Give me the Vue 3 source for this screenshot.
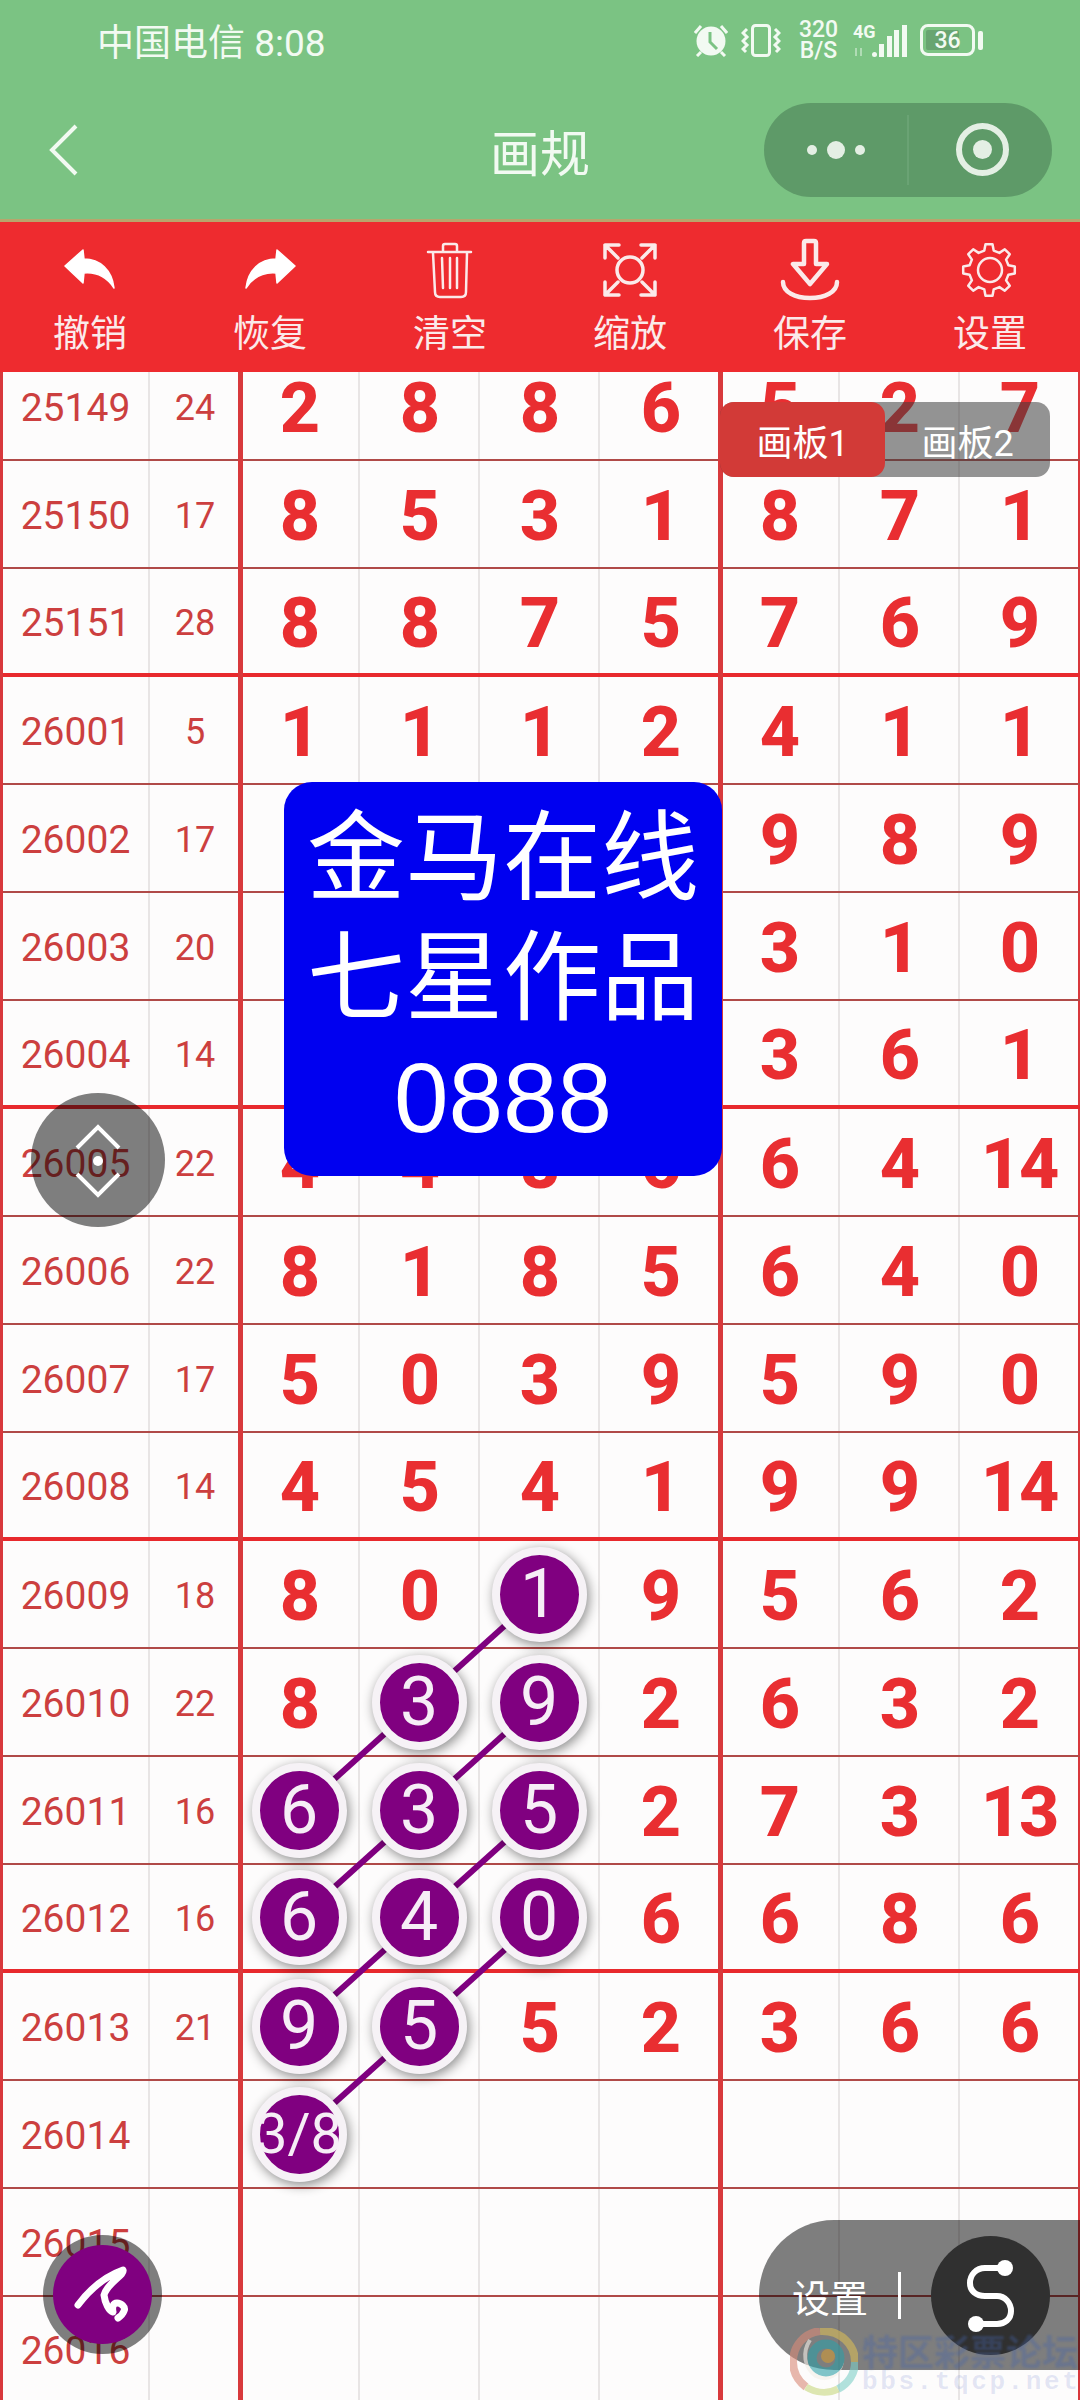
<template>
  <div class="page">
    <header class="top">
      <div class="status">
        <span class="carrier">中国电信 8:08</span>
        <div class="status-icons">
          <svg class="alarm" width="34" height="33" viewBox="0 0 34 33">
            <circle cx="17" cy="17" r="14.5" fill="#f2faf2" />
            <path d="M16 8V18L23 25" fill="none" stroke="#7bc383" stroke-width="3" />
            <path d="M1 9L7 2M33 9L27 2M7 28L3 32M27 28L31 32" fill="none" stroke="#f2faf2" stroke-width="3" />
          </svg>
          <svg class="vibrate" width="40" height="33" viewBox="0 0 40 33">
            <rect x="11.5" y="1.5" width="17" height="30" rx="3" fill="none" stroke="#f2faf2" stroke-width="3" />
            <path d="M6 5L2 9L6 13L2 17L6 21L2 25L5 28M34 5L38 9L34 13L38 17L34 21L38 25L35 28" fill="none" stroke="#f2faf2" stroke-width="3" />
          </svg>
          <div class="speed"><span>320</span><span>B/S</span></div>
          <svg class="net" width="54" height="34" viewBox="0 0 54 34">
            <text x="0" y="15" class="net-text">4G</text>
            <path d="M3 25V33M8 25V33" stroke="#f2faf2" stroke-opacity=".45" stroke-width="2" />
            <rect x="19" y="29" width="5" height="5" rx="2.5" fill="#f2faf2" />
            <rect x="26" y="21" width="5" height="13" fill="#f2faf2" />
            <rect x="34" y="13" width="5" height="21" fill="#f2faf2" />
            <rect x="41" y="7" width="5" height="27" fill="#f2faf2" />
            <rect x="49" y="2" width="5" height="32" fill="#f2faf2" />
          </svg>
          <div class="battery">
            <div class="battery-body"><span class="battery-fill"></span><span class="battery-num">36</span></div>
            <span class="battery-tip"></span>
          </div>
        </div>
      </div>

      <nav class="nav">
        <svg class="back" width="30" height="52" viewBox="0 0 30 52">
          <path d="M27 2L3 26L27 50" fill="none" stroke="#f2faf2" stroke-width="4" />
        </svg>
        <h1 class="title">画规</h1>
        <div class="capsule">
          <div class="capsule-dots"><i class="small"></i><i class="big"></i><i class="small"></i></div>
          <span class="capsule-line"></span>
          <div class="capsule-target"><i></i></div>
        </div>
      </nav>
    </header>

    <div class="toolbar">
      <div v-for="tool in tools" :key="tool.label" class="tool">
        <svg width="70" height="70" viewBox="0 0 70 70">
          <path v-if="tool.fill" :d="tool.fill" fill="#fff" stroke="#fff" stroke-width="1.5" stroke-linejoin="round" />
          <path v-if="tool.line" :d="tool.line" fill="none" stroke="#fbeaea" :stroke-width="tool.width" stroke-linejoin="round" stroke-linecap="round" />
          <circle v-if="tool.ring" cx="35" :cy="tool.ringY" :r="tool.ring" fill="none" stroke="#fbeaea" :stroke-width="tool.width" />
        </svg>
        <span>{{ tool.label }}</span>
      </div>
    </div>

    <main class="board">
      <div class="sheet">
        <svg class="links" width="1080" height="2052">
          <line
            v-for="(link, i) in links"
            :key="i"
            :x1="cx(link[1])"
            :y1="cy(link[0])"
            :x2="cx(link[3])"
            :y2="cy(link[2])"
            stroke="#800080"
            stroke-width="6"
          />
        </svg>

        <div v-for="(row, r) in rows" :key="row.no" class="row" :class="{ heavy: (r + 2) % 4 === 0 }">
          <div class="cell no">{{ row.no }}</div>
          <div class="cell sum sep">{{ row.sum }}</div>
          <div
            v-for="(value, c) in row.nums"
            :key="c"
            class="cell num"
            :class="{ sep: c === 3 }"
          >
            <span v-if="picked[r + '-' + c]" class="ball" :class="{ tiny: picked[r + '-' + c].length > 1 }">{{ picked[r + '-' + c] }}</span>
            <span v-else class="digit">{{ value }}</span>
          </div>
        </div>
      </div>
    </main>

    <div class="tabs">
      <span class="tab active">画板1</span>
      <span class="tab">画板2</span>
    </div>

    <div class="notice">
      <div>金马在线</div>
      <div>七星作品</div>
      <div>0888</div>
    </div>

    <div class="float-move">
      <svg width="60" height="90" viewBox="0 0 60 90">
        <path d="M9 33L30 12L51 33M9 59L30 80L51 59" fill="none" stroke="#fff" stroke-width="4" />
        <circle cx="30" cy="46" r="5" fill="#fff" />
      </svg>
    </div>

    <div class="float-pen">
      <div class="pen-inner">
        <svg width="99" height="99" viewBox="0 0 99 99">
          <path
            d="M25 60C34 48 50 32 70 25C72 30 54 38 51 50C52 58 56 66 60 67C59 62 60 58 64 58C68 58 73 62 71 66C70 69 68 71 65 73"
            fill="none"
            stroke="#fff"
            stroke-width="7"
            stroke-linecap="round"
            stroke-linejoin="round"
          />
        </svg>
      </div>
    </div>

    <div class="settings">
      <span class="settings-text">设置</span>
      <span class="settings-line"></span>
      <div class="settings-btn">
        <svg width="119" height="119" viewBox="0 0 119 119">
          <path d="M74 32H54C45 32 39 39 39 47C39 55 45 60 54 60H66C74 60 80 67 80 75C80 83 74 88 66 88H45" fill="none" stroke="#fff" stroke-width="6" />
          <circle cx="74" cy="32" r="8" fill="#fff" />
          <circle cx="45" cy="88" r="8" fill="#fff" />
        </svg>
      </div>
    </div>

    <div class="forum-mark">
      <svg width="68" height="68" viewBox="0 0 68 68">
        <path d="M30 3C14 5 3 18 3 34C3 44 8 53 16 59" fill="none" stroke="#d98a78" stroke-width="8" />
        <path d="M30 3C50 2 65 16 65 34" fill="none" stroke="#d8bc58" stroke-width="8" />
        <path d="M65 34C65 46 58 56 48 61" fill="none" stroke="#7fd0c8" stroke-width="8" />
        <path d="M48 61C38 66 26 65 16 59" fill="none" stroke="#c8d880" stroke-width="7" />
        <path d="M20 12C12 24 14 40 26 48C38 54 50 46 52 34" fill="none" stroke="#f4efe8" stroke-width="4" />
        <circle cx="36" cy="30" r="14" fill="none" stroke="#2f9fa6" stroke-width="9" />
        <circle cx="38" cy="28" r="7" fill="#d09a38" />
      </svg>
      <div class="forum-text">
        <div class="forum-name">特区彩票论坛</div>
        <div class="forum-url">bbs.tqcp.net</div>
      </div>
    </div>
  </div>
</template>

<script setup>
const gearPath = (x, y, outer, inner, teeth) => {
  const step = (Math.PI * 2) / teeth;
  const pts = [];
  for (let i = 0; i < teeth; i++) {
    const a = i * step - Math.PI / 2;
    const at = (r, d) => {
      const px = x + r * Math.cos(a + d * step);
      const py = y + r * Math.sin(a + d * step);
      return px.toFixed(1) + " " + py.toFixed(1);
    };
    pts.push(at(inner, -0.3), at(outer, -0.17), at(outer, 0.17), at(inner, 0.3));
  }
  return "M" + pts.join("L") + "Z";
};

const tools = [
  {
    label: "撤销",
    fill: "M10 29L28 13L29 22C45 22 57 33 59 51C51 39 41 35 29 36L28 46Z"
  },
  {
    label: "恢复",
    fill: "M60 29L42 13L41 22C25 22 13 33 11 51C19 39 29 35 41 36L42 46Z"
  },
  {
    label: "清空",
    line: "M13 15H56M28 15V9Q28 7 30 7H40Q42 7 42 9V15M18 16L20 55Q20 60 25 60H46Q51 60 51 55L52 16M27 21L28 51M35 21V51M42 21L42 51",
    width: 2.5
  },
  {
    label: "缩放",
    line: "M24 8H10V21M10 8L23 21M46 8H60V21M60 8L47 21M24 58H10V45M10 58L23 45M46 58H60V45M60 58L47 45",
    ring: 13,
    ringY: 33,
    width: 3.5
  },
  {
    label: "保存",
    line: "M29 6Q29 4 31 4H39Q41 4 41 6V27H52L35 47L18 27H29ZM8 45C8 55 20 61 35 61C50 61 62 55 62 45",
    width: 4.5
  },
  {
    label: "设置",
    line: gearPath(34, 33, 26, 20, 8),
    ring: 12,
    ringY: 33,
    width: 2.5
  }
];

const rows = [
  { no: "25149", sum: 24, nums: [2, 8, 8, 6, 5, 2, 7] },
  { no: "25150", sum: 17, nums: [8, 5, 3, 1, 8, 7, 1] },
  { no: "25151", sum: 28, nums: [8, 8, 7, 5, 7, 6, 9] },
  { no: "26001", sum: 5, nums: [1, 1, 1, 2, 4, 1, 1] },
  { no: "26002", sum: 17, nums: ["", "", "", "", 9, 8, 9] },
  { no: "26003", sum: 20, nums: ["", "", "", "", 3, 1, 0] },
  { no: "26004", sum: 14, nums: ["", "", "", "", 3, 6, 1] },
  { no: "26005", sum: 22, nums: [4, 4, 8, 6, 6, 4, 14] },
  { no: "26006", sum: 22, nums: [8, 1, 8, 5, 6, 4, 0] },
  { no: "26007", sum: 17, nums: [5, 0, 3, 9, 5, 9, 0] },
  { no: "26008", sum: 14, nums: [4, 5, 4, 1, 9, 9, 14] },
  { no: "26009", sum: 18, nums: [8, 0, 1, 9, 5, 6, 2] },
  { no: "26010", sum: 22, nums: [8, 3, 9, 2, 6, 3, 2] },
  { no: "26011", sum: 16, nums: [6, 3, 5, 2, 7, 3, 13] },
  { no: "26012", sum: 16, nums: [6, 4, 0, 6, 6, 8, 6] },
  { no: "26013", sum: 21, nums: [9, 5, 5, 2, 3, 6, 6] },
  { no: "26014", sum: "", nums: ["", "", "", "", "", "", ""] },
  { no: "26015", sum: "", nums: ["", "", "", "", "", "", ""] },
  { no: "26016", sum: "", nums: ["", "", "", "", "", "", ""] }
];

// balls placed on the sheet, keyed by row-column
const picked = {
  "11-2": "1",
  "12-1": "3",
  "12-2": "9",
  "13-0": "6",
  "13-1": "3",
  "13-2": "5",
  "14-0": "6",
  "14-1": "4",
  "14-2": "0",
  "15-0": "9",
  "15-1": "5",
  "16-0": "3/8"
};

const links = [
  [11, 2, 12, 1],
  [12, 1, 13, 0],
  [12, 2, 13, 1],
  [13, 1, 14, 0],
  [13, 2, 14, 1],
  [14, 1, 15, 0],
  [14, 2, 15, 1],
  [15, 1, 16, 0]
];

const cx = (col) => 300 + col * 120;
const cy = (row) => 53 + row * 108;
</script>

<style scoped>
.page {
  position: relative;
  width: 1080px;
  height: 2400px;
  overflow: hidden;
  background: #fdfcfc;
  font-family: Roboto, "Noto Sans CJK SC", sans-serif;
}

.top {
  height: 219px;
  background: #7bc383;
  border-bottom: 3px solid #b9a56c;
  color: #f2faf2;
}

.status {
  display: flex;
  align-items: center;
  height: 80px;
  padding: 0 97px;
}

.carrier {
  font-size: 37px;
}

.status-icons {
  display: flex;
  align-items: center;
  margin-left: auto;
}

.vibrate {
  margin-left: 13px;
}

.speed {
  display: flex;
  flex-direction: column;
  align-items: center;
  margin-left: 18px;
  width: 39px;
  font-size: 23px;
  font-weight: 500;
  line-height: 21px;
}

.net {
  margin-left: 15px;
}

.net-text {
  font-family: Roboto, sans-serif;
  font-size: 18px;
  font-weight: 700;
  fill: #f2faf2;
}

.battery {
  display: flex;
  align-items: center;
  margin-left: 13px;
}

.battery-body {
  position: relative;
  display: flex;
  align-items: center;
  justify-content: center;
  box-sizing: border-box;
  width: 55px;
  height: 32px;
  border: 3px solid #f2faf2;
  border-radius: 8px;
}

.battery-fill {
  position: absolute;
  left: 3px;
  top: 3px;
  bottom: 3px;
  width: 33px;
  border-radius: 2px;
  background: rgba(70, 110, 80, 0.35);
}

.battery-num {
  position: relative;
  font-size: 23px;
  font-weight: 500;
  line-height: 1;
}

.battery-tip {
  width: 5px;
  height: 19px;
  margin-left: 3px;
  border-radius: 2px;
  background: #f2faf2;
}

.nav {
  display: grid;
  grid-template-columns: 1fr auto 1fr;
  align-items: center;
  height: 139px;
}

.back {
  margin-left: 49px;
}

.title {
  margin: 0;
  font-size: 50px;
  font-weight: 400;
}

.capsule {
  display: flex;
  align-items: center;
  justify-self: end;
  width: 288px;
  height: 94px;
  margin-right: 28px;
  border-radius: 47px;
  background: #5e9a68;
}

.capsule-dots {
  display: flex;
  align-items: center;
  justify-content: center;
  gap: 10px;
  width: 143px;
}

.capsule-dots i {
  display: block;
  border-radius: 50%;
  background: #e4efe4;
}

.capsule-dots .small {
  width: 10px;
  height: 10px;
}

.capsule-dots .big {
  width: 18px;
  height: 18px;
}

.capsule-line {
  width: 2px;
  height: 70px;
  background: #6aa374;
}

.capsule-target {
  display: flex;
  align-items: center;
  justify-content: center;
  box-sizing: border-box;
  width: 53px;
  height: 53px;
  margin-left: 47px;
  border: 6px solid #e4efe4;
  border-radius: 50%;
}

.capsule-target i {
  display: block;
  width: 19px;
  height: 19px;
  border-radius: 50%;
  background: #e4efe4;
}

.toolbar {
  display: grid;
  grid-template-columns: repeat(6, 1fr);
  box-sizing: border-box;
  height: 150px;
  padding-top: 15px;
  background: #ee2b2f;
  color: #fbeaea;
}

.tool {
  display: flex;
  flex-direction: column;
  align-items: center;
  font-size: 37px;
  line-height: 56px;
}

.board {
  height: 2028px;
  overflow: hidden;
}

.sheet {
  position: relative;
  margin-top: -19px;
  border-left: 3px solid #d8383c;
}

.links {
  position: absolute;
  left: -3px;
  top: 0;
  z-index: 1;
}

.row {
  display: grid;
  grid-template-columns: 147px 90px repeat(7, 120px);
  box-sizing: border-box;
  height: 108px;
  border-bottom: 2px solid #b04a48;
}

.row.heavy {
  border-bottom: 4px solid #e8292d;
}

.cell {
  position: relative;
  display: flex;
  align-items: center;
  justify-content: center;
  box-sizing: border-box;
  border-right: 2px solid #e8e5e5;
  color: #cc3f3f;
}

.cell.sep {
  border-right: none;
}

.cell.sep::after {
  content: "";
  position: absolute;
  top: 0;
  bottom: -4px;
  right: -3px;
  width: 5px;
  background: #d8393c;
}

.no {
  padding-top: 3px;
  font-size: 39px;
}

.sum {
  padding-top: 3px;
  font-size: 36px;
}

.num {
  font-size: 70px;
  font-weight: 800;
  color: #e92e31;
}

.digit {
  margin-top: 3px;
  letter-spacing: -2px;
}

.cell:last-child {
  border-right: 2px solid #d8383c;
}

.ball {
  position: relative;
  z-index: 2;
  display: flex;
  align-items: center;
  justify-content: center;
  flex: none;
  box-sizing: border-box;
  width: 95px;
  height: 95px;
  border: 8.5px solid #f6f2f6;
  border-radius: 50%;
  background: #800080;
  box-shadow: 2px 3px 12px rgba(0, 0, 0, 0.45);
  color: #f6eef6;
  font-size: 68px;
  font-weight: 400;
}

.ball.tiny {
  font-size: 56px;
  white-space: nowrap;
}

.tabs {
  position: absolute;
  left: 720px;
  top: 402px;
  z-index: 3;
  display: flex;
  width: 330px;
  height: 75px;
  border-radius: 14px;
  background: rgba(60, 60, 60, 0.55);
  color: #fff;
  font-size: 36px;
}

.tab {
  display: flex;
  align-items: center;
  justify-content: center;
  flex: 1;
  border-radius: 14px;
}

.tab.active {
  flex: none;
  width: 165px;
  background: #d23a37;
}

.notice {
  position: absolute;
  left: 284px;
  top: 782px;
  z-index: 3;
  box-sizing: border-box;
  width: 438px;
  height: 394px;
  padding-top: 16px;
  border-radius: 28px;
  background: #0000f0;
  color: #fff;
  font-family: "Liberation Sans", "Noto Sans CJK SC", sans-serif;
  font-size: 98px;
  line-height: 120px;
  text-align: center;
}

.float-move {
  position: absolute;
  left: 31px;
  top: 1093px;
  z-index: 3;
  display: flex;
  align-items: center;
  justify-content: center;
  width: 134px;
  height: 134px;
  border-radius: 50%;
  background: rgba(0, 0, 0, 0.5);
}

.float-pen {
  position: absolute;
  left: 43px;
  top: 2235px;
  z-index: 3;
  display: flex;
  align-items: center;
  justify-content: center;
  width: 119px;
  height: 119px;
  border-radius: 50%;
  background: rgba(0, 0, 0, 0.5);
}

.pen-inner {
  width: 99px;
  height: 99px;
  border-radius: 50%;
  background: #800080;
}

.settings {
  position: absolute;
  left: 759px;
  right: 0;
  top: 2220px;
  z-index: 3;
  display: flex;
  align-items: center;
  height: 150px;
  padding-left: 33px;
  border-radius: 75px 0 0 75px;
  background: rgba(0, 0, 0, 0.5);
  color: #fff;
  font-size: 38px;
}

.settings-line {
  width: 3px;
  height: 47px;
  margin: 0 30px;
  background: #fff;
}

.settings-btn {
  width: 119px;
  height: 119px;
  border-radius: 50%;
  background: #303030;
}

.forum-mark {
  position: absolute;
  left: 790px;
  top: 2328px;
  z-index: 4;
  display: flex;
  width: 300px;
}

.forum-mark svg {
  flex: none;
  opacity: 0.6;
}

.forum-text {
  margin-left: 4px;
  padding-top: 8px;
  white-space: nowrap;
}

.forum-name {
  color: rgba(70, 100, 170, 0.36);
  font-size: 36px;
  font-weight: 700;
  line-height: 36px;
  filter: blur(1px);
}

.forum-url {
  color: rgba(90, 110, 200, 0.16);
  font-family: "Liberation Mono", monospace;
  font-size: 26px;
  font-weight: 700;
  letter-spacing: 2.6px;
  line-height: 20px;
}
</style>

<style>
html,
body {
  background: #fdfcfc;
}
</style>
